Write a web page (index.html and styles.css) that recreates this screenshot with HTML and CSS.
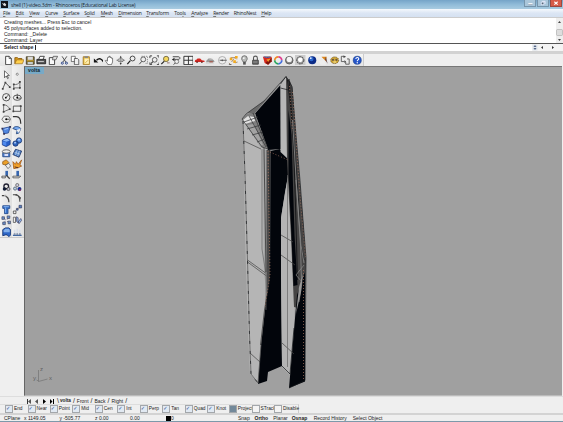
FILE: index.html
```html
<!DOCTYPE html>
<html lang="en">
<head>
<meta charset="utf-8">
<title>shell (1)-video.3dm - Rhinoceros</title>
<link rel="stylesheet" href="styles.css">
</head>
<body>
<div class="app">
<header class="title">
  <svg class="logo" viewBox="0 0 8 8"><rect width="8" height="8" fill="#10151b"/><path d="M1 2l2 1 1-1 2 2-1 2-2-1z" fill="#ddd"/></svg>
  <span class="title-text">shell (1)-video.3dm - Rhinoceros (Educational Lab License)</span>
  <div class="winbtns">
    <i class="wb"><svg viewBox="0 0 12 7"><path d="M4 4.5h5" stroke="#fff" stroke-width="1.6"/><path d="M4 5.5h5" stroke="#667" stroke-width=".5"/></svg></i>
    <i class="wb"><svg viewBox="0 0 12 7"><path d="M5 1.5h3.500v3M4 2.500h3v3H4z" fill="none" stroke="#eef" /><path d="M4.500 3h2v2h-2z" fill="#567"/></svg></i>
    <i class="wb close"><svg viewBox="0 0 12 7"><path d="M4 2l4 3.500M8 2L4 5.500" stroke="#fff" stroke-width="1.300"/></svg></i>
  </div>
</header>
<nav class="menu">
  <span><u>F</u>ile</span><span><u>E</u>dit</span><span><u>V</u>iew</span><span><u>C</u>urve</span><span><u>S</u>urface</span><span>S<u>o</u>lid</span><span><u>M</u>esh</span><span><u>D</u>imension</span><span><u>T</u>ransform</span><span>Too<u>l</u>s</span><span><u>A</u>nalyze</span><span><u>R</u>ender</span><span>RhinoNest</span><span><u>H</u>elp</span>
</nav>
<section class="command">
  <div class="history">
    <div class="lines"><p>Creating meshes... Press Esc to cancel</p><p>45 polysurfaces added to selection.</p><p>Command: _Delete</p><p>Command: Layer</p></div>
    <svg class="scroll" viewBox="0 0 7 25"><rect width="7" height="25" fill="#eee"/><path d="M2 5l1.500-2L5 5zM2 21l1.500 2L5 21z" fill="#444"/><rect x=".5" y="11.500" width="6" height="6" rx="1" fill="#ddd" stroke="#aaa" stroke-width=".6"/></svg>
  </div>
  <div class="prompt"><b>Select shape</b><i class="caret"></i>
    <svg class="spin" viewBox="0 0 31 7"><rect width="31" height="7" fill="#f4f4f4"/><rect x=".5" y=".5" width="5" height="6" fill="#dde3ea"/><path d="M1.500 3L3 1l1.500 2zM1.500 4L3 6l1.500-2z" fill="#568"/><path d="M11 2v3L9 3.500zM20 2v3l2-1.500z" fill="#333"/></svg>
  </div>
</section>
<div class="toolbar">
  <div class="tools">
    <svg viewBox="0 0 12 12"><path d="M3 1.500h4l2.500 2.500v7H3z" fill="#fff" stroke="#333"/><path d="M7 1.500V4h2.500" fill="none" stroke="#333" stroke-width=".8"/></svg>
    <svg viewBox="0 0 12 12"><path d="M1 10V3h3l1 1h4v2" fill="#d99b20" stroke="#885a0c"/><path d="M1 10l2-4.500h8.500L9.500 10z" fill="#ffd04c" stroke="#936316" stroke-width=".7"/></svg>
    <svg viewBox="0 0 12 12"><path d="M1.500 2h9v8.500h-9z" fill="#836c25" stroke="#443f32"/><path d="M3 2h6v3.500H3z" fill="#ddd"/><path d="M3 8h6v2.500H3z" fill="#c5cdd0"/><path d="M2 6.500h8" stroke="#c9a637"/></svg>
    <svg viewBox="0 0 12 12"><path d="M3 5l1.500-3.500h5L8 5" fill="#fff" stroke="#333"/><path d="M1 5h10v5H1z" fill="#535353" stroke="#222"/><path d="M2 7.500h7" stroke="#ddd"/></svg>
    <svg viewBox="0 0 12 12"><path d="M1.500 3h6v8h-6z" fill="#f7f7f7" stroke="#333"/><path d="M6 1.500h5L9 5.500H5z" fill="#ddd" stroke="#444" stroke-width=".8"/></svg>
    <svg viewBox="0 0 12 12"><path d="M3.500 1.500l4.500 7M9 1.500L4.500 8" stroke="#444" stroke-width="1"/><circle cx="3.800" cy="9.300" r="1.200" fill="none" stroke="#223d83"/><circle cx="8.500" cy="9.300" r="1.200" fill="none" stroke="#223d83"/></svg>
    <svg viewBox="0 0 12 12"><path d="M1.500 1.500h4.500v6H1.500z" fill="#fff" stroke="#444" stroke-width=".8"/><path d="M5 4h3.500l1.500 1.500V11H5z" fill="#eee" stroke="#333" stroke-width=".8"/></svg>
    <svg viewBox="0 0 12 12"><path d="M2.500 2h7v9h-7z" fill="#edbd3c" stroke="#a37a25"/><path d="M4 4h5v6H4z" fill="#fff2b8"/><path d="M4 1.500h4v2H4z" fill="#888"/><path d="M5 9l3-3" stroke="#d1a33a"/></svg>
    <svg viewBox="0 0 12 12"><path d="M4 6c3-3 6-2 8 2" fill="none" stroke="#111" stroke-width="1.500"/><path d="M1 4v4.500h5z" fill="#111"/></svg>
    <svg viewBox="0 0 12 12"><path d="M4 10L1.500 6.500l1-.6L4 7V3l1-.5.700.500V1.500h1.300V3l1-.7.800 1V4l1-.2V8L8.500 11h-4z" fill="#fff" stroke="#333" stroke-width=".7"/></svg>
    <svg viewBox="0 0 12 12"><path d="M6.500 1v10M1.500 6h10" stroke="#888" stroke-width=".8"/><ellipse cx="6.500" cy="6" rx="3.500" ry="1.800" fill="none" stroke="#555" stroke-width=".8"/><path d="M5.300 3l1.200-2L7.700 3zM5.300 9l1.200 2 1.200-2z" fill="#333"/></svg>
    <svg viewBox="0 0 12 12"><path d="M5 6.500L1.500 10.500" stroke="#222" stroke-width="1.400"/><circle cx="7.500" cy="4" r="2.800" fill="#eee" stroke="#333"/></svg>
    <svg viewBox="0 0 12 12"><path d="M4.500 7L1.500 10.500" stroke="#444" stroke-width="1.100"/><circle cx="6" cy="5" r="2.800" fill="#eee" stroke="#444" stroke-width=".9"/><path d="M4 1.500h7v8H8" fill="none" stroke="#666" stroke-dasharray="1.500 1" stroke-width=".8"/></svg>
    <svg viewBox="0 0 12 12"><path d="M1 3.500V1h2.500M9 1h2.500v2.500M11.500 8.500V11H9M3.500 11H1V8.500" fill="none" stroke="#333"/><circle cx="6.500" cy="5.500" r="2.700" fill="#eee" stroke="#444" stroke-width=".9"/><path d="M4.500 7.500L2 10" stroke="#333" stroke-width="1.200"/></svg>
    <svg viewBox="0 0 12 12"><path d="M5 7L1.500 10.500" stroke="#222" stroke-width="1.400"/><circle cx="7" cy="4.500" r="3" fill="#f5d75d" stroke="#6b623f"/><path d="M8 9h3" stroke="#866" /></svg>
    <svg viewBox="0 0 12 12"><path d="M2 2h6c3 0 3 3 0 3H4" fill="none" stroke="#333" stroke-width="1"/><path d="M1 5l3-2v4z" fill="#222"/><circle cx="6.500" cy="7.500" r="2.300" fill="#eee" stroke="#555" stroke-width=".8"/><path d="M5 9l-2 2" stroke="#333"/></svg>
    <svg viewBox="0 0 12 12"><path d="M1 1.500h10.500v9.500H1zM6.200 1.500V11M1 6h10.500" fill="#f5f5f5" stroke="#333" stroke-width="1.100"/></svg>
    <svg viewBox="0 0 12 12"><path d="M1 7c0-2 2-1 3-3h3l2 2 3 .5V8H1z" fill="#d32620"/><circle cx="3.500" cy="8" r="1" fill="#622"/><circle cx="9" cy="8" r="1" fill="#622"/></svg>
    <svg viewBox="0 0 12 12"><path d="M1 7l3-3h3l3 2 1 2H2z" fill="#999"/><path d="M1 9h9M5 5h4" stroke="#bbb"/><path d="M5 7h4v1.500H5z" fill="#a55d50"/></svg>
    <svg viewBox="0 0 12 12"><circle cx="6" cy="6" r="4.300" fill="#eee" stroke="#999" stroke-width=".8"/><path d="M3 6h8" stroke="#555"/><circle cx="6" cy="6" r="1" fill="#555"/></svg>
    <svg viewBox="0 0 12 12"><path d="M3 3h5l2 2M4 8l3-4M1 9l2 2M8 9l3-1" stroke="#8c6a4b" stroke-width=".8" fill="none"/><path d="M2 3h3v3H2zM8 1h3v3H8zM6 6h3v3H6z" fill="#f1aa20"/><path d="M1 11h3" stroke="#555"/></svg>
    <svg viewBox="0 0 12 12"><path d="M4.800 8C4 6 3 6 3 4a3.200 3.200 0 016.400 0c0 2-1 2-1.700 4z" fill="#b8bab8" stroke="#555" stroke-width=".8"/><path d="M4.700 8h3v3h-3z" fill="#555"/><circle cx="5.500" cy="3.500" r="1" fill="#fff"/></svg>
    <svg viewBox="0 0 12 12"><path d="M4 6V3.500a2.200 2.200 0 014.400 0V6" fill="none" stroke="#555" stroke-width="1.200"/><path d="M3 6h6.500v4.500H3z" fill="#666" stroke="#444"/><path d="M3.500 8h5" stroke="#999"/></svg>
    <svg viewBox="0 0 12 12"><path d="M1 2h10v5L7 11 3 9z" fill="#d7291d"/><path d="M7 6l4-3v4l-4 4-3-2z" fill="#7e150d"/><path d="M5 5l5-1-3 4z" fill="#f09a25"/><path d="M2 2l4 1 4-1" stroke="#57c"/></svg>
    <svg viewBox="0 0 12 12" fill="none" stroke-width="2"><path d="M6 2a4 4 0 014 4" stroke="#e13b8d"/><path d="M10 6a4 4 0 01-4 4" stroke="#3e6bdc"/><path d="M6 10a4 4 0 01-4-4" stroke="#25a65c"/><path d="M2 6a4 4 0 014-4" stroke="#ef892a"/></svg>
    <svg viewBox="0 0 12 12"><circle cx="6" cy="6" r="4.300" fill="#888" stroke="#555"/><circle cx="6" cy="5" r="3" fill="#f5f5f5"/></svg>
    <svg viewBox="0 0 12 12"><path d="M0 0h12v12H0z" fill="#ccc"/><circle cx="6" cy="6" r="4.200" fill="#999" stroke="#444" stroke-dasharray="2 1"/><circle cx="6" cy="5.500" r="2.700" fill="#fff"/></svg>
    <svg viewBox="0 0 12 12"><circle cx="6" cy="6" r="4.600" fill="#0b2b86"/><circle cx="5" cy="4.500" r="2.500" fill="#2d68ce"/><circle cx="4.300" cy="3.600" r="1" fill="#dce9ff"/></svg>
    <svg viewBox="0 0 12 12"><path d="M4 2h6l-1 5z" fill="#dd861c"/><path d="M9 2l2 8-3-5z" fill="#644"/><path d="M1 7l6-1 2 5H3z" fill="#eee"/></svg>
    <svg viewBox="0 0 12 12"><ellipse cx="6.500" cy="6" rx="4.500" ry="3.800" fill="#d4aa38" stroke="#6b5421" stroke-dasharray="1.500 1"/><circle cx="4.500" cy="5.500" r="1.300" fill="#654"/><circle cx="8.500" cy="5.500" r="1.300" fill="#654"/><path d="M5 8h3" stroke="#fff2b0"/></svg>
    <svg viewBox="0 0 12 12"><path d="M5 1.500H1.500v6H5M8 4.500h2.500v6H6.500V8" fill="none" stroke="#555"/><path d="M4 .5l3 1.500-3 1.500zM5 6l2 1.500L5 9z" fill="#444"/></svg>
    <svg viewBox="0 0 12 12"><circle cx="6" cy="6" r="4.600" fill="#2555c9" stroke="#133985" stroke-width=".7"/><path d="M4.400 4.600c0-2.500 3.500-2.300 3.300-.200C7.600 5.600 6 5.500 6 7" fill="none" stroke="#fff" stroke-width="1.200"/><circle cx="6" cy="8.800" r=".8" fill="#fff"/></svg>
  </div>
</div>
<main class="main">
  <aside class="side"><div class="palette">
    <svg viewBox="0 0 12 12"><path d="M4 2v8l2-2 1.500 3 1-.5L7 7.500h2.500z" fill="#fff" stroke="#333" stroke-width=".8"/></svg>
    <svg viewBox="0 0 12 12"><circle cx="6" cy="6" r="1.200" fill="#fff" stroke="#666" stroke-width=".8"/></svg>
    <svg viewBox="0 0 12 12"><path d="M2 10l3-7 5 5" fill="none" stroke="#444"/><path d="M1 9h2v2H1zM4 2h2v2H4zM9 7h2v2H9z" fill="#444"/></svg>
    <svg viewBox="0 0 12 12"><path d="M2 10V5c3 1 6-1 7-3v7H2" fill="none" stroke="#666"/><path d="M1 4h2v2H1zM8 1h2v2H8zM8 8h2v2H8zM1 9h2v2H1z" fill="#444"/></svg>
    <svg viewBox="0 0 12 12"><circle cx="6" cy="6" r="4.200" fill="#eee" stroke="#444"/><path d="M5.500 6.500l3-3" stroke="#444"/><circle cx="5.500" cy="6.500" r="1"/></svg>
    <svg viewBox="0 0 12 12"><ellipse cx="6" cy="6.500" rx="4.500" ry="3" fill="#eee" stroke="#444"/><path d="M6 2v5h5" fill="none" stroke="#555"/><circle cx="6" cy="6.500" r="1"/></svg>
    <svg viewBox="0 0 12 12"><path d="M3 10V2c4 0 6 3 7 5z" fill="none" stroke="#666"/><path d="M2 1h2v2H2zM2 9h2v2H2zM9 6h2v2H9z" fill="#444"/></svg>
    <svg viewBox="0 0 12 12"><path d="M1.500 3.500h8.500v6H1.500z" fill="#eee" stroke="#444"/><path d="M9 2.500h2v2H9zM.5 8.500h2v2h-2z" fill="#444"/></svg>
    <svg viewBox="0 0 12 12"><path d="M3.500 2.500h5L11 6 8.500 9.500h-5L1 6z" fill="#eee" stroke="#666"/><path d="M6 6h4" stroke="#444"/><circle cx="6" cy="6" r="1.200"/></svg>
    <svg viewBox="0 0 12 12"><path d="M1 3h4c4 0 5 3 5 8" fill="none" stroke="#333" stroke-width="1.400"/></svg>
    <svg viewBox="0 0 12 12"><path d="M1.500 4l9-2-2 7-5 1z" fill="#5187e0" stroke="#2f4f94"/><path d="M.5 3h2v2h-2zM9.500 1h2v2h-2zM2.500 9h2v2h-2z" fill="#335"/><path d="M4 5l4-1" stroke="#bed5ff"/></svg>
    <svg viewBox="0 0 12 12"><path d="M1 4c2-3 6-3 9 0L8 9 5 10l1-4z" fill="#78aaf0" stroke="#234477"/><path d="M5 6l5-2-2 5z" fill="#eee"/></svg>
    <svg viewBox="0 0 12 12"><path d="M1.500 3.500L7 1.500l3.500 2v5L6 11 1.500 9z" fill="#2960c8" stroke="#17377c" stroke-width=".7"/><path d="M2 4l4 1.500L10 4 7 2z" fill="#8db8f5"/><path d="M2 5l4 1v4L2 8.500z" fill="#4f8aed"/></svg>
    <svg viewBox="0 0 12 12"><circle cx="8" cy="4" r="3" fill="#4d87dd" stroke="#173571"/><circle cx="4" cy="7.500" r="3" fill="#2f65be" stroke="#173571"/><circle cx="3.500" cy="6.500" r="1" fill="#bcd6ff"/><circle cx="8" cy="3" r="1" fill="#bcd6ff"/></svg>
    <svg viewBox="0 0 12 12"><path d="M2 5h8v5H2z" fill="#4e82d5" stroke="#294b86"/><ellipse cx="6" cy="4" rx="4.500" ry="2" fill="#eee" stroke="#555"/><path d="M4 7h4v2H4z" fill="#eef"/></svg>
    <svg viewBox="0 0 12 12"><path d="M4 1.500l7 2-3 7-7-3z" fill="#4e81c9" stroke="#263c6c"/><path d="M3 5l6 2M6 2L4 8M8.500 3L6.500 9" stroke="#c2d5ed" stroke-width=".8"/></svg>
    <svg viewBox="0 0 12 12"><path d="M2 3l4-2 3 3-3 3-4-1z" fill="#eca129" stroke="#9a6420"/><path d="M5 7l4-2 2 3-3 3z" fill="#eee" stroke="#555" stroke-width=".8"/></svg>
    <svg viewBox="0 0 12 12"><path d="M1 3l3 3 1-3 2 3 4-5-2 6 2 1-4 2-5 1z" fill="#f1a12a" stroke="#9b4d0c" stroke-width=".8"/><path d="M3 9l4 1" stroke="#422"/></svg>
    <svg viewBox="0 0 12 12"><path d="M5 1h3v6H5z" fill="#3565af"/><path d="M1 7h4v2H1z" fill="#eee" stroke="#333" stroke-width=".8"/><path d="M6 6l4 4" stroke="#444" stroke-width="1.400"/></svg>
    <svg viewBox="0 0 12 12"><path d="M5 1h3v6H5z" fill="#3565af"/><path d="M1 7h9l-2 2H1z" fill="#ddd" stroke="#444" stroke-width=".8"/></svg>
    <svg viewBox="0 0 12 12"><circle cx="6" cy="5" r="2.700" fill="none" stroke="#223" stroke-width="1.500"/><circle cx="4" cy="8" r="2" fill="#111a33"/><circle cx="8.500" cy="8" r="1.800" fill="#bbc" stroke="#333" stroke-width=".8"/></svg>
    <svg viewBox="0 0 12 12"><circle cx="6" cy="3.500" r="1.800" fill="#ccd" stroke="#555" stroke-width=".8"/><circle cx="3.500" cy="7.500" r="1.800" fill="#bcd" stroke="#456" stroke-width=".8"/><circle cx="8.500" cy="8" r="2.300" fill="#172c8a"/><circle cx="9" cy="9" r="1" fill="#a24"/></svg>
    <svg viewBox="0 0 12 12"><path d="M1 3h3M5 3.500c3 1 4 4 4 7" fill="none" stroke="#444" stroke-width="1.400"/><path d="M4 2h2v2H4z" fill="#aaa"/></svg>
    <svg viewBox="0 0 12 12"><path d="M1 2h4c3 1 4 4 4 8M7 3l3 3" fill="none" stroke="#444" stroke-width="1.200"/><path d="M4 1h2v2H4zM8 5h2v2H8z" fill="#555"/></svg>
    <svg viewBox="0 0 12 12"><path d="M2 2h8v3H8v6H4V5H2z" fill="#3873cb" stroke="#2a4f90"/><path d="M3 3h6M5 4v6" stroke="#a4cbff" stroke-width=".8"/></svg>
    <svg viewBox="0 0 12 12"><path d="M3 9l6-6" stroke="#555" stroke-dasharray="1.500 1"/><path d="M8 1.500h3v3H8zM5 5h2v2H5z" fill="#5682be" stroke="#335" stroke-width=".7"/><path d="M1.500 8h3v3h-3z" fill="#eee" stroke="#333" stroke-width=".8"/></svg>
    <svg viewBox="0 0 12 12"><path d="M2 2l8 8M10 2l-8 8" stroke="#779"/><path d="M1 2h3v3H1zM7 1h3v3H7zM2 8h3v3H2zM8 7h3v3H8z" fill="#668dcb" stroke="#445" stroke-width=".7"/><path d="M5 5h2v2H5z" fill="#eee"/></svg>
    <svg viewBox="0 0 12 12"><path d="M1.500 2.500h2.500v6H1.500z" fill="#eee" stroke="#444" stroke-width=".8"/><path d="M5 2l2 1v6l-2-2zM10 4l1 2-3 4-1-2z" fill="#8fb5e8" stroke="#446" stroke-width=".8"/></svg>
    <svg viewBox="0 0 12 12"><path d="M2 3l3-2h4l2 2v6l-2 2-2-2H5l-3 1z" fill="#2e67c7" stroke="#183674"/><path d="M3 4l2-2h4l1 2v2H3z" fill="#82afea"/></svg>
    <svg viewBox="0 0 12 12"><path d="M1 9.500h10" stroke="#345d9b" stroke-width="1.400"/><path d="M3 3v5M6 2v6M9 3v5" stroke="#d9dfea" stroke-width="1.800"/><path d="M2 8h2M5 8h2M8 8h2" stroke="#457"/></svg>
  </div></aside>
  <section class="viewport">
    <svg class="scene" viewBox="25 67 537 328">
      <g class="axis"><path d="M38.500 370v11.500l9-2.500M38.500 381l-2-1"/><text x="33" y="379.500">y</text><text x="40" y="371">z</text><text x="49" y="380">x</text></g>
      <path fill="#b5b5b5" d="M243 120l18 28 9 1 1 126-5 30-6 44-2 34-8-9-2-44-3-95z"/>
      <path fill="#a2a2a2" d="M263 150l6-1 2 130-4 15-3-20z"/>
      <path fill="#4b4a4a" d="M266.500 150h4v128l-4 16z"/>
      <path fill="#02050b" d="M280.500 85L255 113.500l13 36.500 13-1z"/>
      <path fill="#02050b" d="M270.500 151l9.500-2 9 11v12l-4 20-4 26v57l1 91-14 6-1 9-9 3 3-38 5-45 4-25z"/>
      <path fill="#b7b7b7" d="M280.500 84l5.500-7 3 7v76l-8.500-8z"/>
      <path fill="#b4b4b4" d="M288.500 172l1.500 28 3 40 3 35-2 53-4 47-8-8-1-92v-57z"/>
      <path fill="#454444" d="M286 76.500l4.500 5.500 2 6 3.500 47 4 48 3.500 42 2.500 35-1 50-11-3-3-70-3.500-66-.5-10z"/>
      <path fill="#02050b" d="M288.500 110l3 25 3 100 3 50-4 1-2-50-3-61zM305 292v89.500L289 388l5-58 3-35 8-23z"/>
      <path d="M287.500 80l3 25 3 40 2 60 2 75M289 79l4 50 4 51 4 65 3 15" fill="none" stroke="#131416" stroke-width=".9"/>
      <path d="M292.500 120l4 65 4 60 1 38M296 180l5 65 3 18" fill="none" stroke="#858585" stroke-width=".9"/>
      <path d="M304 265l-8 10 6 7-3 20" fill="none" stroke="#8b8b8b" stroke-width=".7"/>
      <path fill="#999" d="M299 287l4-13-2 18-5 22z"/>
      <path fill="#808080" d="M242 119l5-5 8-1 13 36-6-2z"/>
      <path fill="#e2e2e2" d="M243 120l5-4 6 1 1 4-10 3z"/>
      <path fill="#a3a3a3" d="M247 125l7-1 9 21-3 1z"/>
      <path fill="#6a6a6a" d="M247 113l18-13 15-16-26 30z"/>
      <g fill="none" stroke="#16181b" stroke-width=".7">
        <path d="M286 76.500L264 101l-18 13-4 5 20 28 6 2M244 122l14-5M247 129l14-4M252 135l11-3M257 142l8-3M249 116l17 31M253 113l15 36" stroke="#303234"/>
        <path d="M280.500 88l8 2M280.500 84l5.500-7.500 6 10 4 49 4 45 3 40 3 37-1 123L289 388M282 366l8 8 4-46"/>
        <path d="M243 121l2 54 2.500 85 2 75 1.500 39 7 9 3-38" stroke="#555"/>
        <path d="M243 121l2 54 2.500 85 2 75 1.500 39 7 9" stroke-dasharray="3 7"/>
        <path d="M244 141l17 8M247.500 260l18 13M247.500 262l19 14M250 353l10 9M281 235l12 7M281 255l14 10M282 343l12 11" stroke="#444"/>
        <path d="M262 149v100l4 26v35M287.500 175v192" stroke="#656565"/>
        <path d="M264 148l2 124M269.500 150v130l-5 30-4 35" stroke="#262626"/>
      </g>
      <path d="M268 151l2 124-5 32M270 152l18 8M292.500 92l4 55 4 55 5 55M303.500 270v110M289.500 86l3 45" fill="none" stroke="#ad7863" stroke-width=".7" stroke-dasharray="1 2"/>
    </svg>
    <div class="vlabel">volta</div>
  </section>
</main>
<div class="tabs">
  <svg class="tabnav" viewBox="0 0 30 8"><path d="M2.500 2v5" stroke="#333"/><path d="M6 2v5L3 4.500zM13 2v5l-3-2.500z" fill="#555"/><path d="M18 2v5l3-2.500zM25 2v5l2.500-2.500z"/><path d="M28.500 2v5" stroke="#000"/></svg>
  <span class="tab active">volta</span><span class="tab">Front</span><span class="tab">Back</span><span class="tab">Right</span>
</div>
<div class="osnap">
  <label class="on">End</label><label class="on">Near</label><label class="on">Point</label><label class="on">Mid</label><label class="on">Cen</label><label class="on">Int</label><label class="on">Perp</label><label class="on">Tan</label><label class="on">Quad</label><label class="on">Knot</label><label class="mixed">Project</label><label>STrack</label><label>Disable</label>
</div>
<footer class="status">
  <span>CPlane</span><span>x 1149.05</span><span>y -505.77</span><span>z 0.00</span><span>0.00</span><span class="layer"><i></i>0</span><span>Snap</span><b>Ortho</b><span>Planar</span><b>Osnap</b><span>Record History</span><span>Select Object</span>
</footer>
</div>
</body>
</html>
```
FILE: styles.css
```css
* { box-sizing: border-box; }
body { margin: 0; overflow: hidden; }
p { margin: 0; }
svg { display: block; }
.app {
  width: 563px; height: 422px; display: flex; flex-direction: column;
  background: #efefef; color: #222; font: 5px/6px "Liberation Sans", sans-serif;
  white-space: nowrap; border-bottom: 1px solid #7d99aa;
}
.title {
  height: 9px; display: flex; align-items: center; padding-left: 1px;
  background: linear-gradient(#75a4c8, #90bbd8 50%, #a8cbe1);
  font: 5px/8px "Open Sans", sans-serif; color: #17232e; letter-spacing: -.17px;
}
.logo { width: 7px; height: 7px; margin-right: 3px; }
.winbtns { margin-left: auto; display: flex; gap: 1px; height: 8px; align-self: flex-start; padding-right: 1px; }
.wb { width: 12px; height: 7px; background: #a9c6da; border: 1px solid #7694aa; border-top: 0; }
.wb svg { width: 100%; height: 100%; }
.close { background: #d75b48; border-color: #984a43; }
.menu {
  height: 8px; display: grid; padding-left: 3px; align-items: center;
  grid-template-columns: 12.7px 13.500px 16px 18px 21px 16.500px 17.500px 28px 28px 17px 22px 20.500px 27.500px 20px;
  background: linear-gradient(#f5f9fd, #dce6f4 50%, #d5e1f1);
  font: 5px/8px "Open Sans", sans-serif; letter-spacing: -.18px;
}
.menu u { text-decoration-color: #777; text-decoration-thickness: .4px; text-underline-offset: .5px; }
.command { height: 34px; background: #fff; border-top: 1px solid #ccc; }
.history { height: 26px; display: flex; justify-content: space-between; border-bottom: 1px solid #555; }
.lines { padding: .5px 0 0 4px; }
.lines p { height: 6px; }
.scroll { width: 7px; height: 25px; }
.prompt { height: 7px; display: flex; align-items: center; padding-left: 4px; }
.prompt b { font-size: 4.800px; }
.caret { width: 1px; height: 5px; background: #222; margin-left: 2px; }
.spin { width: 31px; height: 7px; margin-left: auto; }
.toolbar { height: 15px; border-top: 3px solid #d2d2d2; flex: none; }
.tools {
  width: 364px; height: 12px; padding-left: 2.500px; display: grid; align-items: center;
  grid-template-columns: repeat(32, 11.270px); border-right: 1px solid #ccc;
  background: linear-gradient(#f4f4f4, #e4e4e4);
}
.tools svg { width: 10.500px; height: 10.500px; }
.main { height: 330px; display: flex; flex: none; }
.side { width: 24px; background: #efefef; }
.palette {
  height: 172px; padding: 3px 0 0 .5px; display: grid;
  grid-template-columns: 11.500px 11.500px; grid-auto-rows: 11.270px;
  background: linear-gradient(90deg, #f3f3f3, #e0e0e0 48%, #c9c9c9 50%, #f1f1f1 52%, #e0e0e0);
  border-bottom: 1px solid #ccc;
}
.palette svg { width: 10.500px; height: 10.500px; }
.viewport {
  position: relative; width: 538px; background: #a0a0a0;
  border-left: 1px solid #666; border-top: 1px solid #777; border-bottom: 1px solid #bbb;
}
.scene { width: 537px; height: 328px; }
.axis path { fill: none; stroke: #737373; stroke-width: .7; }
.axis text { font: 6px "Liberation Sans", sans-serif; fill: #606060; }
.vlabel {
  position: absolute; left: 0; top: 0; width: 19px; height: 6.500px; padding-left: 3px;
  background: #78a9c6; color: #0d1c28; font: bold 5px/6px "Liberation Sans", sans-serif; letter-spacing: .1px;
}
.tabs { height: 8px; display: flex; align-items: center; padding-left: 25px; border-top: 1px solid #ddd; flex: none; }
.tabnav { width: 30px; height: 8px; }
.tab { padding: 0 2px; display: flex; }
.tab::after { content: "/"; font-size: 7px; margin-left: 2px; margin-right: -2px; }
.active { font-weight: bold; font-size: 4.700px; }
.active::before { content: "\\"; font-size: 7px; font-weight: normal; margin-right: 1px; }
.active::after { font-weight: normal; }
.osnap {
  height: 9px; display: grid; align-items: center; padding-left: 5px;
  grid-template-columns: 22.500px 22.300px 22.500px 22.500px 22.500px 22.500px 22.500px 22.500px 22.500px 21.500px 22.800px 22.500px 26px;
  border-top: 1px solid #ddd; flex: none; width: 299px; border-right: 1px solid #ccc; font-size: 4.800px;
}
.osnap label { display: flex; align-items: center; }
.osnap label::before {
  content: ""; width: 6px; height: 6px; flex: none; border: 1px solid #a3a7ab; background: #f4f4f4;
  margin-right: 1px; font: bold 5px/4px "DejaVu Sans", sans-serif; color: #23468f;
}
.osnap .on::before { content: "✓"; background: #e1e9f2; }
.osnap .mixed::before { background: #73899a; }
.status {
  height: 8px; display: grid; align-items: center; padding-left: 4px; flex: none;
  grid-template-columns: 20px 35.500px 35.500px 35px 36px 72px 16.500px 18.700px 18.500px 22px 39px 60px;
  border-top: 2px solid #d3d3d3;
}
.layer { display: flex; align-items: center; }
.layer i { width: 5px; height: 5px; background: #000; }
```
